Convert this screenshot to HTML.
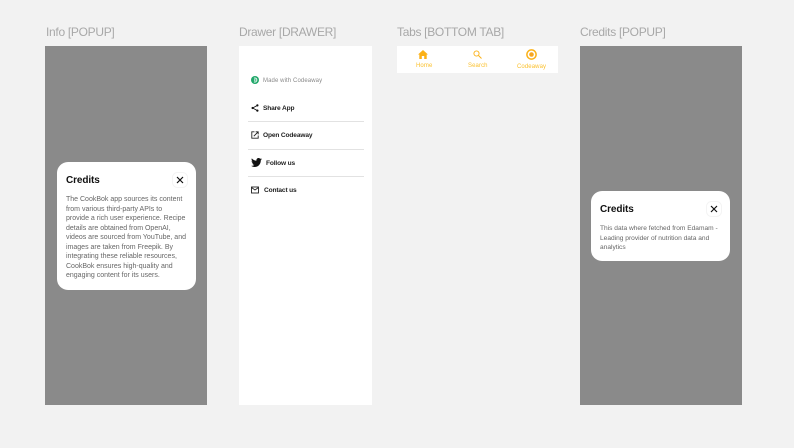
<!DOCTYPE html>
<html><head><meta charset="utf-8">
<style>
html,body{margin:0;padding:0}
body{width:794px;height:448px;background:#f2f2f2;position:relative;overflow:hidden;font-family:"Liberation Sans",sans-serif}
.a{position:absolute;white-space:nowrap}
.lab{font-size:12px;color:#a8a8a8;top:25px;line-height:14px;letter-spacing:-.3px}
.panel{position:absolute;background:#8a8a8a;top:46px;height:359px;width:162px}
.pop{position:absolute;background:#fff;border-radius:11px;width:139px}
.ttl{font-size:10px;font-weight:bold;color:#111;line-height:12px;letter-spacing:-.1px}
.t{font-size:7px;line-height:9.5px;color:#666;letter-spacing:0}
.m{font-size:6.6px;font-weight:bold;color:#222;line-height:8px;letter-spacing:-.15px}
.hr{position:absolute;left:248px;width:116px;height:1px;background:#e2e2e2}
.tab{font-size:6px;color:#fbc02d;line-height:7px;letter-spacing:.1px}
</style></head><body>
<div class="a lab" style="left:46px">Info [POPUP]</div>
<div class="a lab" style="left:239px">Drawer [DRAWER]</div>
<div class="a lab" style="left:397px">Tabs [BOTTOM TAB]</div>
<div class="a lab" style="left:580px">Credits [POPUP]</div>

<div class="panel" style="left:45px"></div>
<div class="pop" style="left:57px;top:162px;height:128px"></div>
<div class="a ttl" style="left:66px;top:175px">Credits</div>
<svg class="a" style="left:172px;top:172px" width="16" height="16" viewBox="0 0 16 16"><rect x=".5" y=".5" width="15" height="15" rx="5" fill="#fff" stroke="#f4f4f4"/><path d="M5 5l6 6M11 5l-6 6" stroke="#111" stroke-width="1.200" fill="none"/></svg>
<div class="a t" style="left:66px;top:195px">The CookBok app sources its content<br>from various third-party APIs to<br>provide a rich user experience. Recipe<br>details are obtained from OpenAI,<br>videos are sourced from YouTube, and<br>images are taken from Freepik. By<br>integrating these reliable resources,<br>CookBok ensures high-quality and<br>engaging content for its users.</div>

<div class="a" style="left:239px;top:46px;width:133px;height:359px;background:#fff"></div>
<svg class="a" style="left:251px;top:76px" width="8" height="8" viewBox="0 0 8 8"><circle cx="4" cy="4" r="4" fill="#22a86b"/><path d="M3 2.200A2 2 0 1 1 3 5.800" stroke="#fff" stroke-width=".9" fill="none"/><circle cx="3.800" cy="4" r=".8" fill="#fff"/></svg>
<div class="a" style="left:263px;top:77px;font-size:6px;line-height:8px;color:#8a8a8a;letter-spacing:.1px">Made with Codeaway</div>
<svg class="a" style="left:251px;top:104px" width="8" height="8" viewBox="0 0 8 8"><path d="M6.400 1.400L1.600 4l4.800 2.600" stroke="#111" stroke-width=".8" fill="none"/><circle cx="6.400" cy="1.400" r="1.100" fill="#111"/><circle cx="1.600" cy="4" r="1.100" fill="#111"/><circle cx="6.400" cy="6.600" r="1.100" fill="#111"/></svg>
<div class="a m" style="left:263px;top:105px">Share App</div>
<div class="hr" style="top:121px"></div>
<svg class="a" style="left:251px;top:131px" width="8" height="8" viewBox="0 0 8 8"><path d="M3.500 .8H.8v6.400h6.400V4.500" stroke="#222" stroke-width=".9" fill="none"/><path d="M2.800 5.200L7 1M4.600 .8h2.600v2.600" stroke="#222" stroke-width=".9" fill="none"/></svg>
<div class="a m" style="left:263px;top:132px">Open Codeaway</div>
<div class="hr" style="top:149px"></div>
<svg class="a" style="left:251px;top:158px" width="11" height="9" viewBox="0 0 24 20"><path d="M24 2.400c-.9.4-1.800.7-2.800.8 1-.6 1.800-1.600 2.200-2.700-1 .6-2 1-3.100 1.200C19.300.7 18 0 16.600 0c-2.700 0-4.900 2.200-4.900 4.900 0 .4 0 .8.100 1.100C7.700 5.800 4.100 3.900 1.700.9 1.300 1.600 1 2.500 1 3.400c0 1.700.9 3.200 2.200 4.100-.8 0-1.600-.2-2.200-.6v.1c0 2.400 1.700 4.400 3.900 4.800-.4.100-.8.200-1.300.2-.3 0-.6 0-.9-.1.600 2 2.400 3.400 4.600 3.400-1.700 1.300-3.800 2.100-6.100 2.100-.4 0-.8 0-1.200-.1C2.200 19.200 4.800 20 7.500 20c9.100 0 14-7.500 14-14v-.6c1-.7 1.800-1.600 2.500-3z" fill="#111"/></svg>
<div class="a m" style="left:266px;top:160px">Follow us</div>
<div class="hr" style="top:176px"></div>
<svg class="a" style="left:251px;top:186px" width="8" height="8" viewBox="0 0 8 8"><rect x=".5" y="1" width="7" height="6" fill="none" stroke="#222" stroke-width=".9"/><path d="M.5 1.500L4 4l3.500-2.500" fill="none" stroke="#222" stroke-width=".9"/></svg>
<div class="a m" style="left:264px;top:187px">Contact us</div>

<div class="a" style="left:397px;top:46px;width:161px;height:27px;background:#fff"></div>
<svg class="a" style="left:418px;top:50px" width="10" height="9" viewBox="0 0 10 9"><path d="M5 0L0 4.500h1.300V9h2.500V6h2.400v3h2.500V4.500H10z" fill="#fbb117"/></svg>
<div class="a tab" style="left:416px;top:63px">Home</div>
<svg class="a" style="left:473px;top:50px" width="9" height="9" viewBox="0 0 9 9"><circle cx="3.500" cy="3.500" r="2.600" fill="none" stroke="#fbb117" stroke-width=".9"/><path d="M5.500 5.500L8.500 8.500" stroke="#fbb117" stroke-width="1"/></svg>
<div class="a tab" style="left:468px;top:63px">Search</div>
<svg class="a" style="left:526px;top:49px" width="11" height="11" viewBox="0 0 11 11"><circle cx="5.500" cy="5.500" r="4.600" fill="none" stroke="#fbb117" stroke-width="1.500"/><circle cx="5.500" cy="5.500" r="2.300" fill="#f5a623"/></svg>
<div class="a tab" style="left:517px;top:64px">Codeaway</div>

<div class="panel" style="left:580px"></div>
<div class="pop" style="left:591px;top:191px;height:70px"></div>
<div class="a ttl" style="left:600px;top:204px">Credits</div>
<svg class="a" style="left:706px;top:201px" width="16" height="16" viewBox="0 0 16 16"><rect x=".5" y=".5" width="15" height="15" rx="5" fill="#fff" stroke="#f4f4f4"/><path d="M5 5l6 6M11 5l-6 6" stroke="#111" stroke-width="1.200" fill="none"/></svg>
<div class="a t" style="left:600px;top:224px;font-size:6.600px">This data where fetched from Edamam -<br>Leading provider of nutrition data and<br>analytics</div>
</body></html>
